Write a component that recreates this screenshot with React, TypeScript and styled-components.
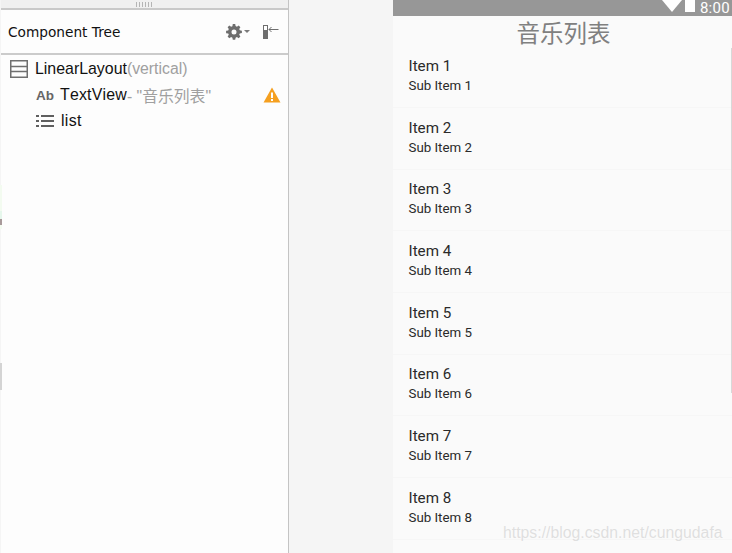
import styled, { createGlobalStyle } from 'styled-components';

const GlobalStyle = createGlobalStyle`
  html, body {
    margin: 0;
    padding: 0;
    width: 732px;
    height: 553px;
    overflow: hidden;
    background: #f5f5f5;
  }
`;

const CJK = `"Noto Sans CJK SC", sans-serif`;
const ITEMS = [1, 2, 3, 4, 5, 6, 7, 8];

function GearIcon() {
  return (
    <svg width='25' height='16' viewBox='0 0 25 16'>
      <path
        fill='#6e6e6e'
        fillRule='evenodd'
        d='M6.8 0h2.4l.4 2.1 1.3.6 1.8-1.2 1.7 1.7-1.2 1.8.6 1.3 2.1.4v2.4l-2.1.4-.6 1.3 1.2 1.8-1.7 1.7-1.8-1.2-1.3.6-.4 2.1H6.8l-.4-2.1-1.3-.6-1.8 1.2-1.7-1.7 1.2-1.8-.6-1.3L.1 9.2V6.8l2.1-.4.6-1.3-1.2-1.8 1.7-1.7 1.8 1.2 1.3-.6zM8 5.5a2.5 2.5 0 1 0 0 5 2.5 2.5 0 0 0 0-5z'
      />
      <path fill='#7a7a7a' d='M18 6h6l-3 3z' />
    </svg>
  );
}

function CollapseIcon() {
  return (
    <svg width='16' height='16' viewBox='0 0 16 16'>
      <rect x='0.5' y='1.5' width='4' height='13' fill='#fff' stroke='#6e6e6e' />
      <rect x='1' y='6' width='3' height='8' fill='#6e6e6e' />
      <path fill='none' stroke='#6e6e6e' d='M6 5.5h9.5M8.5 3 6 5.5 8.5 8' />
    </svg>
  );
}

function LinearIcon() {
  return (
    <svg width='18' height='18' viewBox='0 0 18 18'>
      <rect x='0.75' y='0.75' width='16.5' height='16.5' fill='none' stroke='#6f6f6f' strokeWidth='1.5' />
      <path stroke='#6f6f6f' strokeWidth='1.5' d='M1 6.5h16M1 11.5h16' />
    </svg>
  );
}

function ListIcon() {
  return (
    <svg width='18' height='14' viewBox='0 0 18 14'>
      <path
        stroke='#5f5f5f'
        strokeWidth='2'
        d='M0 2h3M5 2h13M0 7h3M5 7h13M0 12h3M5 12h13'
      />
    </svg>
  );
}

function WarningIcon() {
  return (
    <svg width='18' height='16' viewBox='0 0 18 16'>
      <path fill='#f5a020' d='M9 0.5 17.5 15.5H0.5z' />
      <path fill='#fff' d='M8 5.5h2v5.5H8zM8 12h2v2H8z' />
    </svg>
  );
}

export default function App() {
  return (
    <>
      <GlobalStyle />
      <Screen>
        <TreePanel>
          <EdgeTint />
          <EdgeThumb />
          <GripBar>
            <Grip />
          </GripBar>
          <PanelHeader>
            <PanelTitle>Component Tree</PanelTitle>
            <HeaderTools>
              <GearIcon />
              <CollapseIcon />
            </HeaderTools>
          </PanelHeader>
          <TreeBody>
            <TreeRow $indent={9}>
              <IconSlot $width={18}>
                <LinearIcon />
              </IconSlot>
              <NodeName>LinearLayout</NodeName>
              <NodeHint>(vertical)</NodeHint>
            </TreeRow>
            <TreeRow $indent={35}>
              <AbMark>Ab</AbMark>
              <NodeName $tracking={0.2}>TextView</NodeName>
              <NodeHint>- "音乐列表"</NodeHint>
              <WarningSlot>
                <WarningIcon />
              </WarningSlot>
            </TreeRow>
            <TreeRow $indent={35}>
              <IconSlot $width={18}>
                <ListIcon />
              </IconSlot>
              <NodeName $tracking={0.3}>list</NodeName>
            </TreeRow>
          </TreeBody>
        </TreePanel>
        <Gutter />
        <Phone>
          <StatusBar>
            <WifiMark />
            <BatteryMark />
            <Clock>8:00</Clock>
          </StatusBar>
          <ScreenTitle>音乐列表</ScreenTitle>
          <ItemList>
            {ITEMS.map((item) => (
              <ItemRow key={item}>
                <ItemTitle>Item {item}</ItemTitle>
                <ItemSub>Sub Item {item}</ItemSub>
              </ItemRow>
            ))}
          </ItemList>
          <ScrollThumb />
        </Phone>
        <Watermark>https://blog.csdn.net/cungudafa</Watermark>
      </Screen>
    </>
  );
}

const Screen = styled.div`
  position: relative;
  display: flex;
  width: 732px;
  height: 553px;
  overflow: hidden;
  font-family: 'Roboto', sans-serif;
`;

const TreePanel = styled.div`
  width: 287px;
  margin-left: 1px;
  border-right: 1px solid #c4c4c4;
  background: #fdfdfd;
  display: flex;
  flex-direction: column;
`;

const EdgeTint = styled.div`
  position: absolute;
  left: 0;
  top: 185px;
  width: 2px;
  height: 44px;
  background: linear-gradient(#f3fbf0 0 60%, #e6f7ec 60% 78%, #a89a9a 78% 92%, #f3fbf0 92%);
`;

const EdgeThumb = styled.div`
  position: absolute;
  left: 0;
  top: 363px;
  width: 2px;
  height: 27px;
  background: #d4d4d4;
`;

const GripBar = styled.div`
  height: 8px;
  background: #f0f0f0;
  border-bottom: 2px solid #c9c9c9;
  display: flex;
  align-items: center;
  justify-content: center;
`;

const Grip = styled.div`
  width: 18px;
  height: 5px;
  background: repeating-linear-gradient(90deg, #b5b5b5 0 1px, transparent 1px 3px);
`;

const PanelHeader = styled.div`
  height: 43px;
  padding: 0 9px 0 7px;
  border-bottom: 2px solid #cbcbcb;
  display: flex;
  align-items: center;
  justify-content: space-between;
`;

const PanelTitle = styled.span`
  font-family: 'DejaVu Sans', sans-serif;
  font-size: 13.7px;
  color: #111;
  margin-top: 1px;
`;

const HeaderTools = styled.div`
  display: flex;
  align-items: center;
  gap: 12px;
`;

const TreeBody = styled.div`
  padding-top: 1px;
  display: flex;
  flex-direction: column;
`;

const TreeRow = styled.div<{ $indent: number }>`
  position: relative;
  height: 26px;
  padding-left: ${({ $indent }) => $indent}px;
  display: flex;
  align-items: center;
  white-space: nowrap;
`;

const IconSlot = styled.div<{ $width: number }>`
  width: ${({ $width }) => $width}px;
  margin-right: 7px;
  display: flex;
  align-items: center;
`;

const AbMark = styled.span`
  width: 19px;
  margin-right: 5px;
  font-family: 'Liberation Sans', sans-serif;
  font-size: 13.5px;
  font-weight: 700;
  color: #666;
`;

const NodeName = styled.span<{ $tracking?: number }>`
  font-family: 'Liberation Sans', sans-serif;
  font-size: 15.9px;
  font-kerning: none;
  letter-spacing: ${({ $tracking }) => $tracking ?? 0}px;
  color: #111;
`;

const NodeHint = styled.span`
  font-family: 'Liberation Sans', ${CJK};
  font-size: 15.8px;
  font-kerning: none;
  color: #a0a0a0;
`;

const WarningSlot = styled.div`
  position: absolute;
  right: 7px;
  top: 5px;
  display: flex;
`;

const Gutter = styled.div`
  width: 104px;
  background: #f5f5f5;
`;

const Phone = styled.div`
  position: relative;
  flex: 1;
  background: #fafafa;
  display: flex;
  flex-direction: column;
`;

const ScrollThumb = styled.div`
  position: absolute;
  right: 0;
  top: 48px;
  width: 1px;
  height: 345px;
  background: #d8d8d8;
`;

const StatusBar = styled.div`
  height: 16px;
  background: #979797;
  padding-right: 2px;
  display: flex;
  align-items: center;
  justify-content: flex-end;
`;

const WifiMark = styled.div`
  width: 0;
  height: 0;
  margin-top: -4px;
  border-left: 10px solid transparent;
  border-right: 10px solid transparent;
  border-top: 12px solid #fff;
  margin-right: 3px;
`;

const BatteryMark = styled.div`
  width: 10px;
  height: 12px;
  margin-top: -4px;
  background: #fff;
  margin-right: 5px;
`;

const Clock = styled.span`
  font-size: 15px;
  color: #fff;
  letter-spacing: 0.3px;
`;

const ScreenTitle = styled.div`
  height: 30.5px;
  line-height: 32px;
  padding-left: 2px;
  text-align: center;
  font-family: ${CJK};
  font-size: 23.5px;
  color: #808080;
`;

const ItemList = styled.div`
  display: flex;
  flex-direction: column;
`;

const ItemRow = styled.div`
  height: 60.67px;
  padding-left: 15.5px;
  border-bottom: 1px solid #f6f6f6;
  flex-shrink: 0;
`;

const ItemTitle = styled.div`
  padding-top: 9.6px;
  height: 20px;
  line-height: 20px;
  font-size: 15.2px;
  color: #2a2a2a;
`;

const ItemSub = styled.div`
  height: 19px;
  line-height: 19px;
  font-size: 13.3px;
  color: #2a2a2a;
`;

const Watermark = styled.div`
  position: absolute;
  left: 503px;
  top: 524px;
  font-family: 'Liberation Sans', sans-serif;
  font-size: 15.8px;
  color: rgba(190, 190, 190, 0.45);
`;
